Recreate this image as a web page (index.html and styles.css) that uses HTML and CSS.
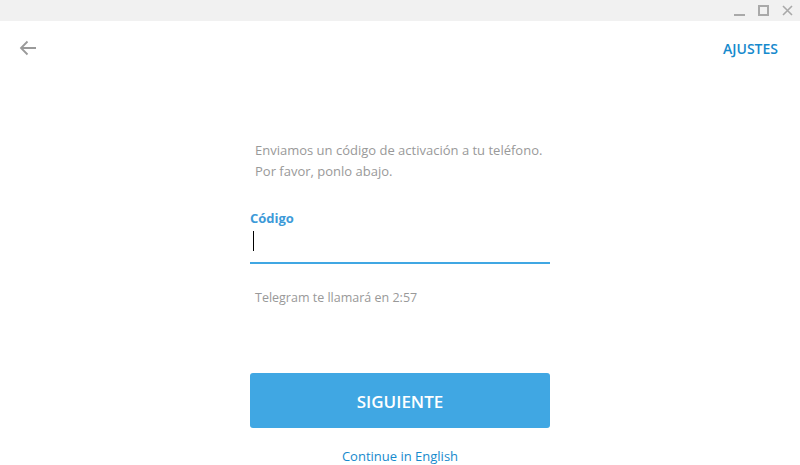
FILE: index.html
```html
<!DOCTYPE html>
<html lang="es">
<head>
    <meta charset="UTF-8">
    <title>Telegram</title>
    <link rel="stylesheet" href="styles.css">
</head>
<body>

    <div class="titlebar">
        <span class="win-btn">
            <svg width="12" height="12" viewBox="0 0 12 12"><rect x="0" y="9" width="11" height="2" fill="#a9a9a9"/></svg>
        </span>
        <span class="win-btn">
            <svg width="12" height="12" viewBox="0 0 12 12"><rect x="1" y="1" width="9" height="9" fill="none" stroke="#a9a9a9" stroke-width="2"/></svg>
        </span>
        <span class="win-btn">
            <svg width="12" height="12" viewBox="0 0 12 12"><path d="M1 1 L10 10 M10 1 L1 10" stroke="#a9a9a9" stroke-width="1.6"/></svg>
        </span>
    </div>

    <div class="top-bar">
        <svg class="back" width="18" height="16" viewBox="0 0 18 16">
            <path d="M17 8 H2 M8.5 1.5 L2 8 L8.5 14.5" fill="none" stroke="#9a9a9a" stroke-width="1.8"/>
        </svg>
        <a class="settings">AJUSTES</a>
    </div>

    <div class="form">
        <p class="intro">Enviamos un código de activación a tu teléfono.<br>Por favor, ponlo abajo.</p>

        <div class="field">
            <div class="label">Código</div>
            <div class="input"><span class="caret"></span></div>
        </div>

        <p class="call">Telegram te llamará en 2:57</p>

        <button class="next">SIGUIENTE</button>

        <a class="lang">Continue in English</a>
    </div>

</body>
</html>
```

FILE: styles.css
```css
body {
    margin: 0;
    font-family: 'Open Sans', 'DejaVu Sans', sans-serif;
    background: #fff;
    color: #000;
}

.titlebar {
    height: 21px;
    background-color: #f1f1f1;
    display: flex;
    justify-content: flex-end;
    align-items: center;
    padding-right: 6px;
    gap: 12px;
}

.win-btn {
    display: flex;
    width: 12px;
    height: 12px;
}

.top-bar {
    height: 54px;
    display: flex;
    align-items: center;
    justify-content: space-between;
    padding: 0 22px 0 19px;
}

.back {
    display: block;
}

.settings {
    font-size: 14px;
    font-weight: 600;
    color: #168acd;
}

.form {
    width: 300px;
    margin: 0 auto;
    padding-top: 65px;
    display: flex;
    flex-direction: column;
}

.intro {
    margin: 0;
    padding-left: 5px;
    font-size: 13px;
    line-height: 21px;
    color: #999;
}

.field {
    margin-top: 26px;
}

.label {
    font-size: 13px;
    font-weight: 700;
    line-height: 20px;
    color: #3d9ad8;
}

.input {
    height: 34px;
    border-bottom: 2px solid #40a7e3;
    display: flex;
    align-items: flex-start;
}

.caret {
    width: 1px;
    height: 20px;
    margin: 3px 0 0 3px;
    background: #000;
}

.call {
    margin: 24px 0 0;
    padding-left: 5px;
    font-size: 12.5px;
    line-height: 20px;
    color: #999;
}

.next {
    margin-top: 65px;
    height: 55px;
    padding-top: 3px;
    border: none;
    border-radius: 3px;
    background-color: #40a7e3;
    color: #fff;
    font-family: 'Open Sans', sans-serif;
    font-size: 17px;
    font-weight: 600;
}

.lang {
    margin-top: 18px;
    text-align: center;
    font-size: 13px;
    line-height: 20px;
    color: #168acd;
}
```
